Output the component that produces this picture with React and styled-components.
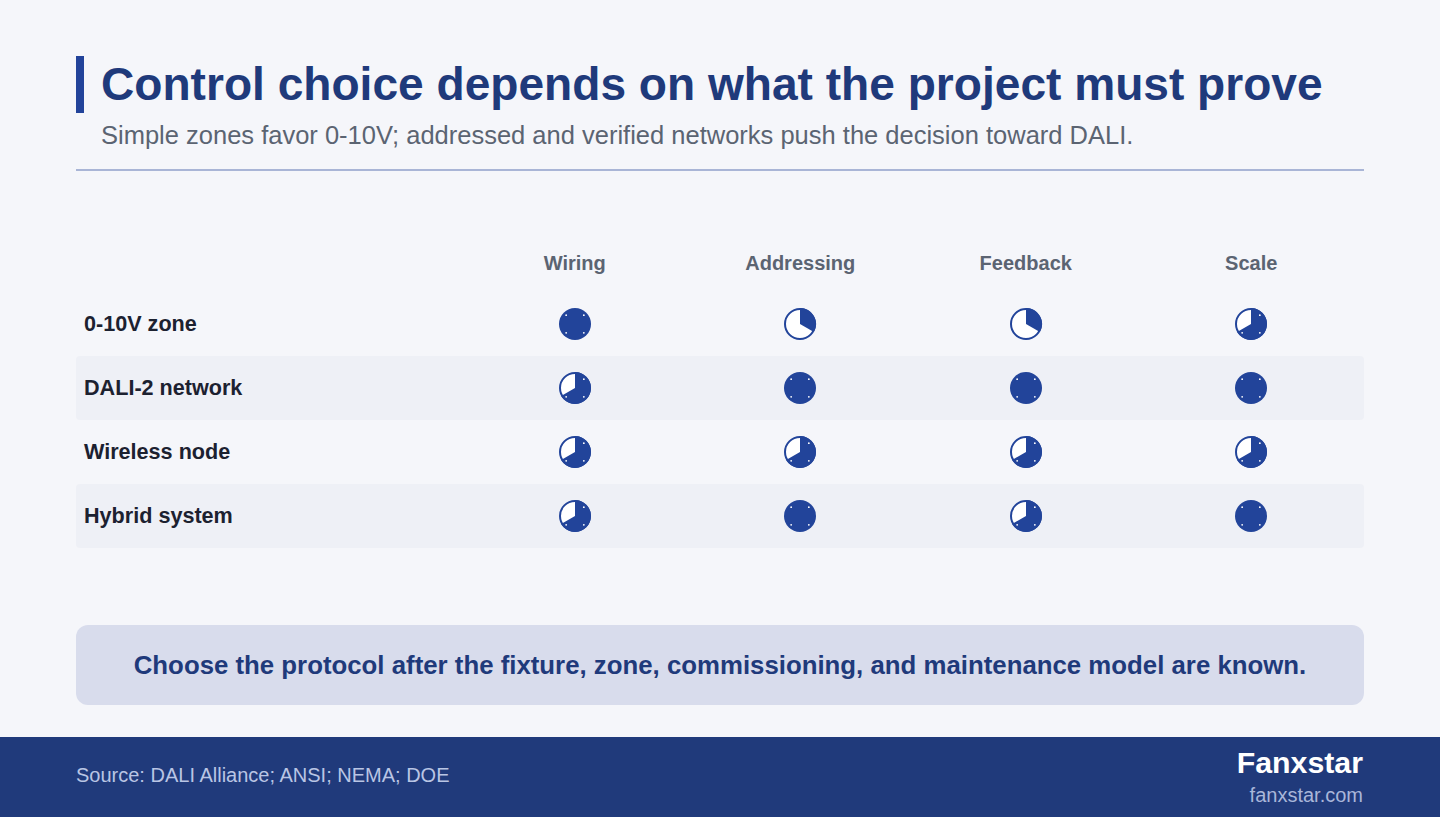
import React from "react"
import styled, { createGlobalStyle } from "styled-components"

const GlobalStyle = createGlobalStyle`
  html, body {
    margin: 0;
    padding: 0;
    background: #f5f6fa;
  }
  body {
    font-family: "Liberation Sans", Arial, sans-serif;
  }
`

const COLUMNS = ["Wiring", "Addressing", "Feedback", "Scale"]

const ROWS = [
  { name: "0-10V zone", levels: [3, 1, 1, 2] },
  { name: "DALI-2 network", levels: [2, 3, 3, 3] },
  { name: "Wireless node", levels: [2, 2, 2, 2] },
  { name: "Hybrid system", levels: [2, 3, 2, 3] },
]

const BLUE = "#22449a"

const HarveyBall = ({ level }) => {
  const r = 16
  const angle = (level / 3) * 360
  const marks = [45, 135, 225, 315].filter((a) => level > 1 && a < angle)

  let wedge = null
  if (level < 3) {
    const rad = (angle * Math.PI) / 180
    const x = r * Math.sin(rad)
    const y = -r * Math.cos(rad)
    const large = angle > 180 ? 1 : 0
    wedge = `M0 0 L0 ${-r} A${r} ${r} 0 ${large} 1 ${x.toFixed(2)} ${y.toFixed(2)} Z`
  }

  return (
    <svg width="34" height="34" viewBox="-17 -17 34 34">
      {level === 3 ? (
        <circle r={r} fill={BLUE} />
      ) : (
        <>
          <circle r={r - 1} fill="#fff" stroke={BLUE} strokeWidth="2" />
          <path d={wedge} fill={BLUE} />
        </>
      )}
      {marks.map((a) => {
        const rad = (a * Math.PI) / 180
        const cx = 12.5 * Math.sin(rad)
        const cy = -12.5 * Math.cos(rad)
        return <circle key={a} cx={cx} cy={cy} r="0.9" fill="#fff" />
      })}
    </svg>
  )
}

const App = () => {
  return (
    <>
      <GlobalStyle />
      <Page>
        <Main>
          <TitleRow>
            <Bar />
            <Title>Control choice depends on what the project must prove</Title>
          </TitleRow>
          <Subtitle>
            Simple zones favor 0-10V; addressed and verified networks push the decision toward DALI.
          </Subtitle>
          <Divider />

          <Table>
            <HeaderRow>
              <span />
              {COLUMNS.map((c) => (
                <HeaderCell key={c}>{c}</HeaderCell>
              ))}
            </HeaderRow>
            {ROWS.map((row, i) => (
              <Row key={row.name} $shaded={i % 2 === 1}>
                <RowLabel>{row.name}</RowLabel>
                {row.levels.map((lvl, j) => (
                  <Cell key={j}>
                    <HarveyBall level={lvl} />
                  </Cell>
                ))}
              </Row>
            ))}
          </Table>

          <Callout>
            Choose the protocol after the fixture, zone, commissioning, and maintenance model are known.
          </Callout>
        </Main>

        <Footer>
          <Source>Source: DALI Alliance; ANSI; NEMA; DOE</Source>
          <Brand>
            <BrandName>Fanxstar</BrandName>
            <BrandUrl>fanxstar.com</BrandUrl>
          </Brand>
        </Footer>
      </Page>
    </>
  )
}

const Page = styled.div`
  width: 1440px;
  height: 817px;
  display: flex;
  flex-direction: column;
  background: #f5f6fa;
  overflow: hidden;
`

const Main = styled.main`
  flex: 1;
  padding: 56px 76px 0;
  display: flex;
  flex-direction: column;
`

const TitleRow = styled.div`
  display: flex;
  align-items: center;
  gap: 17px;
`

const Bar = styled.div`
  width: 8px;
  height: 57px;
  background: #22439a;
  flex-shrink: 0;
`

const Title = styled.h1`
  margin: 0;
  font-size: 46.1px;
  line-height: 57px;
  font-weight: 700;
  color: #1f3a7b;
  letter-spacing: 0;
`

const Subtitle = styled.p`
  margin: 7px 0 0 25px;
  font-size: 25.5px;
  line-height: 30px;
  color: #5b6472;
`

const Divider = styled.hr`
  margin: 19px 0 0;
  border: 0;
  height: 2px;
  background: #a9b5d6;
`

const Table = styled.div`
  margin-top: 63px;
  display: flex;
  flex-direction: column;
`

const grid = `
  display: grid;
  grid-template-columns: 386px repeat(4, 1fr);
  align-items: center;
`

const HeaderRow = styled.div`
  ${grid}
  height: 58px;
`

const HeaderCell = styled.div`
  text-align: center;
  font-size: 20px;
  font-weight: 700;
  color: #5b6472;
`

const Row = styled.div`
  ${grid}
  height: 64px;
  border-radius: 4px;
  background: ${({ $shaded }) => ($shaded ? "#eef0f6" : "transparent")};
`

const RowLabel = styled.div`
  padding-left: 8px;
  font-size: 21.6px;
  font-weight: 700;
  color: #1c2130;
`

const Cell = styled.div`
  display: flex;
  justify-content: center;
  align-items: center;
`

const Callout = styled.div`
  margin-top: 77px;
  height: 80px;
  display: flex;
  align-items: center;
  justify-content: center;
  border-radius: 12px;
  background: #d8dcec;
  color: #1f3a7b;
  font-size: 25.8px;
  font-weight: 700;
`

const Footer = styled.footer`
  height: 80px;
  flex-shrink: 0;
  background: #203a7b;
  display: flex;
  align-items: center;
  justify-content: space-between;
  padding: 0 77px 0 76px;
`

const Source = styled.div`
  font-size: 20px;
  color: #b9c5e4;
  margin-bottom: 3px;
`

const Brand = styled.div`
  display: flex;
  flex-direction: column;
  align-items: flex-end;
  margin-top: 2px;
`

const BrandName = styled.div`
  font-size: 30.3px;
  line-height: 34px;
  font-weight: 700;
  color: #ffffff;
`

const BrandUrl = styled.div`
  font-size: 20px;
  line-height: 30px;
  color: #a9b6d9;
`

export default App
